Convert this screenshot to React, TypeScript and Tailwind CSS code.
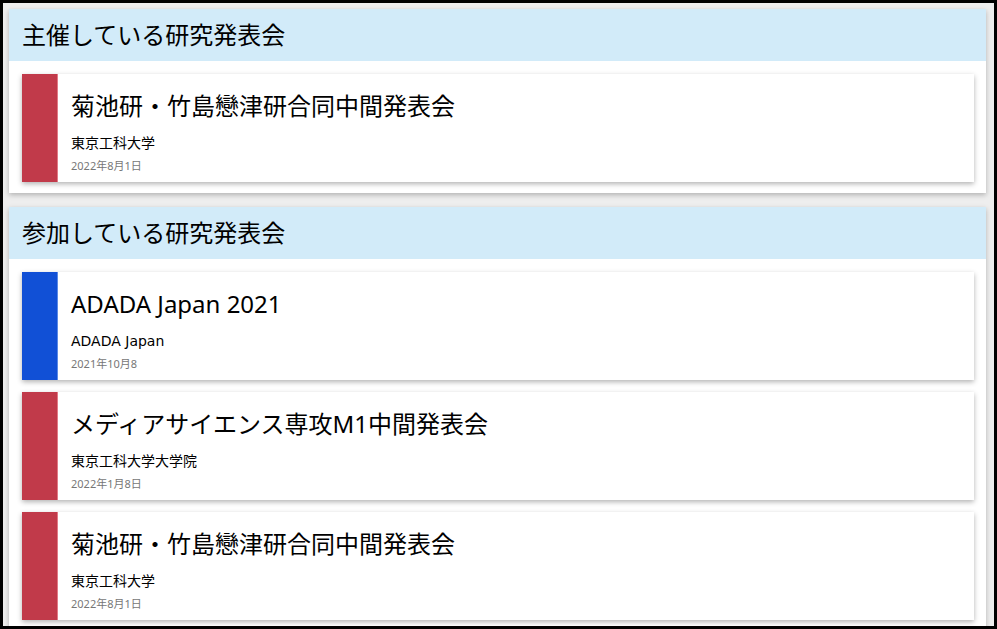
const FONT = "font-['Noto_Sans','Noto_Sans_CJK_JP',sans-serif]";

type Meeting = {
  title: string;
  host: string;
  date: string;
  color: "red" | "blue";
};

const hosted: Meeting[] = [
  { title: "菊池研・竹島戀津研合同中間発表会", host: "東京工科大学", date: "2022年8月1日", color: "red" },
];

const joined: Meeting[] = [
  { title: "ADADA Japan 2021", host: "ADADA Japan", date: "2021年10月8", color: "blue" },
  { title: "メディアサイエンス専攻M1中間発表会", host: "東京工科大学大学院", date: "2022年1月8日", color: "red" },
  { title: "菊池研・竹島戀津研合同中間発表会", host: "東京工科大学", date: "2022年8月1日", color: "red" },
];

function MeetingCard({ m }: { m: Meeting }) {
  return (
    <div className="flex h-[108px] bg-white shadow-[0_2px_5px_rgba(0,0,0,0.3)]">
      {/* color bar */}
      <div
        className={`w-[36px] shrink-0 border-r ${
          m.color === "red" ? "bg-[#c13a4a] border-[#e27a86]" : "bg-[#1150d6] border-[#5b8ae6]"
        }`}
      />
      <div className="flex flex-col pl-[13px]">
        <h3 className="mt-[14px] text-[24px] leading-[36px] text-black">{m.title}</h3>
        <p className="mt-[9px] font-['DejaVu_Sans','Noto_Sans_CJK_JP',sans-serif] text-[14px] leading-[20px] text-black">
          {m.host}
        </p>
        <p className="mt-[5px] text-[11px] leading-[16px] text-[#777]">{m.date}</p>
      </div>
    </div>
  );
}

function Section({ heading, items }: { heading: string; items: Meeting[] }) {
  return (
    <section className="bg-white shadow-[0_2px_5px_rgba(0,0,0,0.25)]">
      <div className="flex h-[52px] items-center bg-[#d2ebf9] px-[13px]">
        <h2 className="text-[24px] leading-none text-black">{heading}</h2>
      </div>
      <div className="flex flex-col gap-[12px] pb-[11px] pl-[13px] pr-[12px] pt-[13px]">
        {items.map((m, i) => (
          <MeetingCard key={i} m={m} />
        ))}
      </div>
    </section>
  );
}

export default function App() {
  return (
    <div
      className={`${FONT} h-[629px] w-[997px] overflow-hidden border-[3px] border-black bg-[#eeeeee] pl-[6px] pr-[8px] pt-[6px]`}
    >
      <div className="flex flex-col gap-[14px]">
        <Section heading="主催している研究発表会" items={hosted} />
        <Section heading="参加している研究発表会" items={joined} />
      </div>
    </div>
  );
}
